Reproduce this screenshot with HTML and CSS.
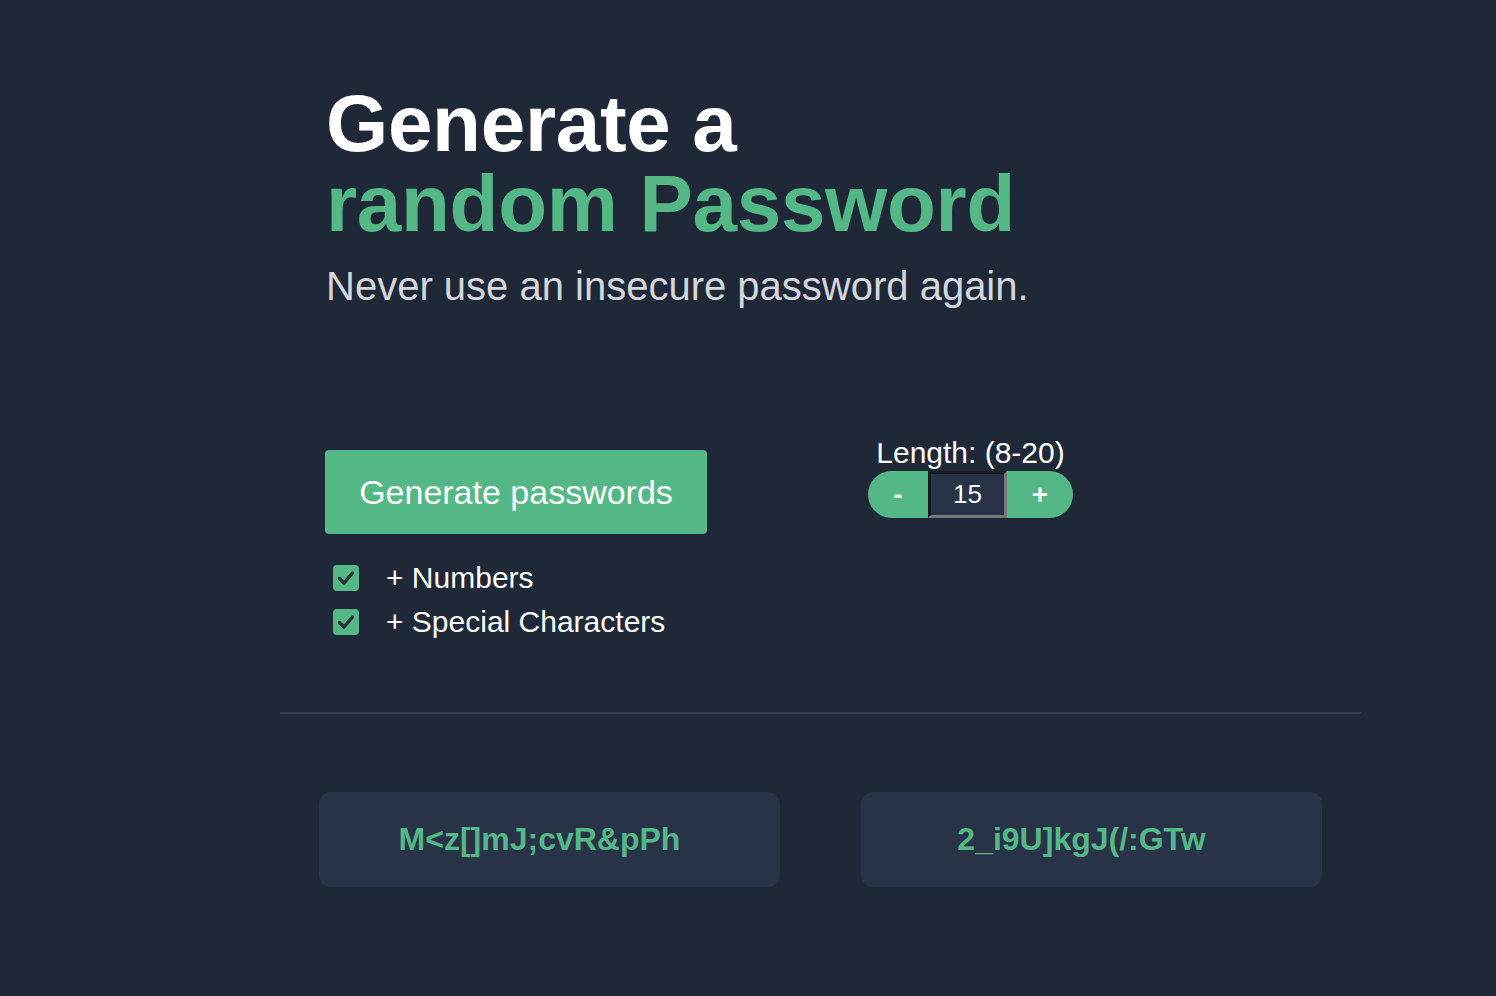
FILE: index.html
```html
<!DOCTYPE html>
<html lang="en">
<head>
<meta charset="utf-8">
<title>Password Generator</title>
<link rel="stylesheet" href="styles.css">
</head>
<body>
<main class="page">
  <section class="hero">
    <h1 class="title"><span class="line">Generate a</span><span class="line accent">random Password</span></h1>
    <p class="subtitle">Never use an insecure password again.</p>
  </section>

  <section class="controls">
    <div class="left-col">
      <button class="generate-btn" type="button">Generate passwords</button>
      <div class="options">
        <label class="option">
          <span class="check"><svg viewBox="0 0 26 26" width="26" height="26"><path d="M6.5 13.5 L11 18 L19.5 8" fill="none" stroke="#2b2f36" stroke-width="3.4" stroke-linecap="round" stroke-linejoin="round"/></svg></span>
          <span class="option-text">+ Numbers</span>
        </label>
        <label class="option">
          <span class="check"><svg viewBox="0 0 26 26" width="26" height="26"><path d="M6.5 13.5 L11 18 L19.5 8" fill="none" stroke="#2b2f36" stroke-width="3.4" stroke-linecap="round" stroke-linejoin="round"/></svg></span>
          <span class="option-text">+ Special Characters</span>
        </label>
      </div>
    </div>
    <div class="length-col">
      <div class="length-label">Length: (8-20)</div>
      <div class="stepper">
        <button class="step-btn minus" type="button">-</button>
        <div class="step-value">15</div>
        <button class="step-btn plus" type="button">+</button>
      </div>
    </div>
  </section>

  <hr class="divider">

  <section class="results">
    <div class="result-card">M&lt;z[]mJ;cvR&amp;pPh</div>
    <div class="result-card">2_i9U]kgJ(/:GTw</div>
  </section>
</main>
</body>
</html>
```
FILE: styles.css
```css
html, body {
  margin: 0;
  padding: 0;
  background: #1f2837;
}
body {
  font-family: "Liberation Sans", Arial, Helvetica, sans-serif;
  color: #ffffff;
  min-height: 996px;
}
.page {
  width: 1082px;
  margin-left: 280px;
  padding-top: 84px;
}
.hero {
  padding-left: 46px;
}
.title {
  margin: 0;
  font-size: 80px;
  line-height: 80px;
  font-weight: 700;
  color: #ffffff;
  letter-spacing: -0.3px;
}
.line {
  display: block;
  height: 80px;
}
.accent {
  color: #53b885;
}
.subtitle {
  margin: 19px 0 0 0;
  font-size: 40px;
  line-height: 46px;
  color: #d4d6dc;
}
.controls {
  display: flex;
  align-items: flex-start;
  padding-left: 45px;
  margin-top: 125px;
}
.left-col {
  display: flex;
  flex-direction: column;
  padding-top: 16px;
}
.generate-btn {
  width: 382px;
  height: 84px;
  border: none;
  border-radius: 4px;
  background: #53b885;
  color: #ffffff;
  font-family: "Liberation Sans", Arial, sans-serif;
  font-size: 34px;
  padding: 0;
  cursor: pointer;
}
.options {
  display: flex;
  flex-direction: column;
  margin-top: 22px;
  padding-left: 8px;
}
.option {
  display: flex;
  align-items: center;
  height: 44px;
}
.check {
  width: 26px;
  height: 26px;
  border-radius: 4px;
  background: #53b885;
  display: flex;
  align-items: center;
  justify-content: center;
}
.check svg {
  display: block;
}
.option-text {
  margin-left: 27px;
  font-size: 30px;
  color: #ffffff;
}
.length-col {
  margin-left: 161px;
  width: 205px;
  display: flex;
  flex-direction: column;
  align-items: center;
}
.length-label {
  font-size: 30px;
  line-height: 37px;
  color: #ffffff;
}
.stepper {
  display: flex;
  height: 47px;
}
.step-btn {
  border: none;
  background: #53b885;
  color: #ffffff;
  font-family: "Liberation Sans", Arial, sans-serif;
  font-size: 28px;
  font-weight: 700;
  height: 47px;
  padding: 0;
  cursor: pointer;
}
.minus {
  width: 60px;
  border-radius: 24px 0 0 24px;
}
.plus {
  width: 66px;
  border-radius: 0 24px 24px 0;
}
.step-value {
  width: 73px;
  height: 41px;
  background: #283347;
  border-style: solid;
  border-width: 3px;
  border-color: #171a1f #777777 #777777 #171a1f;
  display: flex;
  align-items: center;
  justify-content: center;
  font-size: 26px;
  color: #ffffff;
}
.divider {
  margin: 68px 0 0 0;
  border: none;
  height: 2px;
  background: #323c4d;
}
.results {
  display: grid;
  grid-template-columns: 1fr 1fr;
  column-gap: 81px;
  padding: 0 40px 0 39px;
  margin-top: 78px;
}
.result-card {
  height: 95px;
  border-radius: 12px;
  background: #283347;
  color: #53b885;
  font-size: 32px;
  font-weight: 700;
  display: flex;
  align-items: center;
  justify-content: center;
  padding-right: 20px;
}
```
